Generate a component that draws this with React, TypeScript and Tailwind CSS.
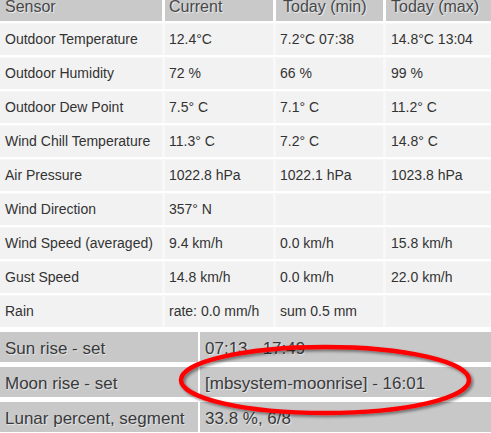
import React from 'react';

const rows = [
  ['Outdoor Temperature', '12.4°C', '7.2°C 07:38', '14.8°C 13:04'],
  ['Outdoor Humidity', '72 %', '66 %', '99 %'],
  ['Outdoor Dew Point', '7.5° C', '7.1° C', '11.2° C'],
  ['Wind Chill Temperature', '11.3° C', '7.2° C', '14.8° C'],
  ['Air Pressure', '1022.8 hPa', '1022.1 hPa', '1023.8 hPa'],
  ['Wind Direction', '357° N', '', ''],
  ['Wind Speed (averaged)', '9.4 km/h', '0.0 km/h', '15.8 km/h'],
  ['Gust Speed', '14.8 km/h', '0.0 km/h', '22.0 km/h'],
  ['Rain', 'rate: 0.0 mm/h', 'sum 0.5 mm', ''],
];

const astro = [
  ['Sun rise - set', '07:13 - 17:49'],
  ['Moon rise - set', '[mbsystem-moonrise] - 16:01'],
  ['Lunar percent, segment', '33.8 %, 6/8'],
];

export default function App() {
  return (
    <div className="relative w-[491px] h-[433px] overflow-hidden bg-white font-['Liberation_Sans',Arial,sans-serif]">
      {/* Header */}
      <div className="grid grid-cols-[162px_108px_107px_1fr] gap-x-[3px] h-[21px] text-[16px] leading-[17px] text-[#474747] [text-shadow:1px_1px_1px_rgba(255,255,255,0.7)]">
        <div className="bg-[#c9c9c9] pl-[5px] -mt-[2px]">Sensor</div>
        <div className="bg-[#c9c9c9] pl-[4px] -mt-[2px]">Current</div>
        <div className="bg-[#c9c9c9] pl-[7px] -mt-[2px]">Today (min)</div>
        <div className="bg-[#c9c9c9] pl-[5px] -mt-[2px]">Today (max)</div>
      </div>

      {/* Sensor rows */}
      {rows.map((r) => (
        <div key={r[0]} className="border-t-2 border-white">
          <div className="grid grid-cols-[162px_108px_107px_1fr] gap-x-[3px] bg-[#f8f8f8] border-t border-[#f7f7f7] h-[32px] text-[14px] text-[#333]">
            <div className="bg-[#f2f2f2] pl-[5px] flex items-center">{r[0]}</div>
            <div className="bg-[#f2f2f2] pl-[4px] flex items-center">{r[1]}</div>
            <div className="bg-[#f2f2f2] pl-[4px] flex items-center">{r[2]}</div>
            <div className="bg-[#f2f2f2] pl-[5px] flex items-center">{r[3]}</div>
          </div>
        </div>
      ))}

      {/* Sun / moon rows */}
      {astro.map((r) => (
        <div key={r[0]} className="pt-[5px] bg-white">
          <div className="grid grid-cols-[198px_1fr] gap-x-[2px] h-[30px] text-[17px] text-[#3a3a3a] [text-shadow:1px_1px_1px_rgba(255,255,255,0.6)]">
            <div className="bg-[#c8c8c8] pl-[5px] pt-[3px] flex items-center">{r[0]}</div>
            <div className="bg-[#c8c8c8] pl-[5px] pt-[3px] flex items-center">{r[1]}</div>
          </div>
        </div>
      ))}

      {/* Red annotation ellipse */}
      <svg className="absolute left-0 top-0 pointer-events-none" width="491" height="433" viewBox="0 0 491 433">
        <defs>
          <filter id="sh" x="-10%" y="-30%" width="120%" height="160%">
            <feDropShadow dx="2" dy="2" stdDeviation="1.5" floodColor="#000" floodOpacity="0.45" />
          </filter>
        </defs>
        <ellipse cx="325" cy="380" rx="144" ry="33" fill="none" stroke="#ff0000" strokeWidth="4.5" filter="url(#sh)" />
      </svg>
    </div>
  );
}
